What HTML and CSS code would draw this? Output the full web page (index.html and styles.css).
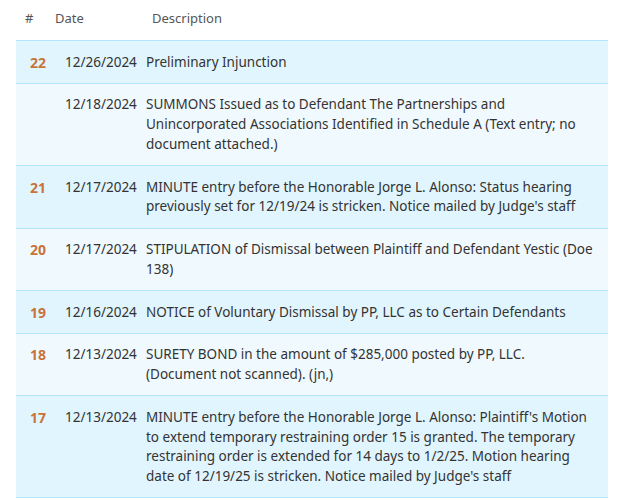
FILE: index.html
```html
<!DOCTYPE html>
<html>
<head>
<meta charset="utf-8">
<link rel="stylesheet" href="styles.css">
</head>
<body>
<div class="docket">
  <div class="head">
    <span class="h-num">#</span>
    <span class="h-date">Date</span>
    <span class="h-desc">Description</span>
  </div>
  <div class="rows">
    <div class="row odd"><span class="num">22</span><span class="date">12/26/2024</span><span class="desc">Preliminary Injunction</span></div>
    <div class="row even"><span class="num"></span><span class="date">12/18/2024</span><span class="desc">SUMMONS Issued as to Defendant The Partnerships and Unincorporated Associations Identified in Schedule A (Text entry; no document attached.)</span></div>
    <div class="row odd"><span class="num">21</span><span class="date">12/17/2024</span><span class="desc">MINUTE entry before the Honorable Jorge L. Alonso: Status hearing previously set for 12/19/24 is stricken. Notice mailed by Judge's staff</span></div>
    <div class="row even"><span class="num">20</span><span class="date">12/17/2024</span><span class="desc">STIPULATION of Dismissal between Plaintiff and Defendant Yestic (Doe 138)</span></div>
    <div class="row odd"><span class="num">19</span><span class="date">12/16/2024</span><span class="desc">NOTICE of Voluntary Dismissal by PP, LLC as to Certain Defendants</span></div>
    <div class="row even"><span class="num">18</span><span class="date">12/13/2024</span><span class="desc">SURETY BOND in the amount of $285,000 posted by PP, LLC. (Document not scanned). (jn,)</span></div>
    <div class="row odd"><span class="num">17</span><span class="date">12/13/2024</span><span class="desc">MINUTE entry before the Honorable Jorge L. Alonso: Plaintiff's Motion to extend temporary restraining order 15 is granted. The temporary restraining order is extended for 14 days to 1/2/25. Motion hearing date of 12/19/25 is stricken. Notice mailed by Judge's staff</span></div>
  </div>
</div>
</body>
</html>
```

FILE: styles.css
```css
html, body {
  margin: 0;
  padding: 0;
  background: #ffffff;
}
body {
  font-family: "Noto Sans", "Open Sans", sans-serif;
  font-size: 13.5px;
  line-height: 19.75px;
  color: #333333;
}
.docket {
  padding: 0 10px 0 16px;
}
.head {
  display: grid;
  grid-template-columns: 30px 97px 1fr;
  height: 38px;
  padding-bottom: 2px;
  align-items: center;
  color: #555555;
  font-size: 13px;
  padding-left: 9px;
}
.rows {
  border-top: 1px solid #b3e5fc;
}
.row {
  display: grid;
  grid-template-columns: 44px 86px 1fr;
  padding: 11.5px 0 10.5px 0;
  border-bottom: 1px solid #b3e5fc;
}
.odd { background: #e1f5fe; }
.even { background: #f0f9fe; }
.num {
  text-align: center;
  font-weight: 700;
  font-size: 14px;
  color: #c8733a;
}
.date {
  padding-left: 5px;
}
.desc {
  padding-right: 14px;
}
```
